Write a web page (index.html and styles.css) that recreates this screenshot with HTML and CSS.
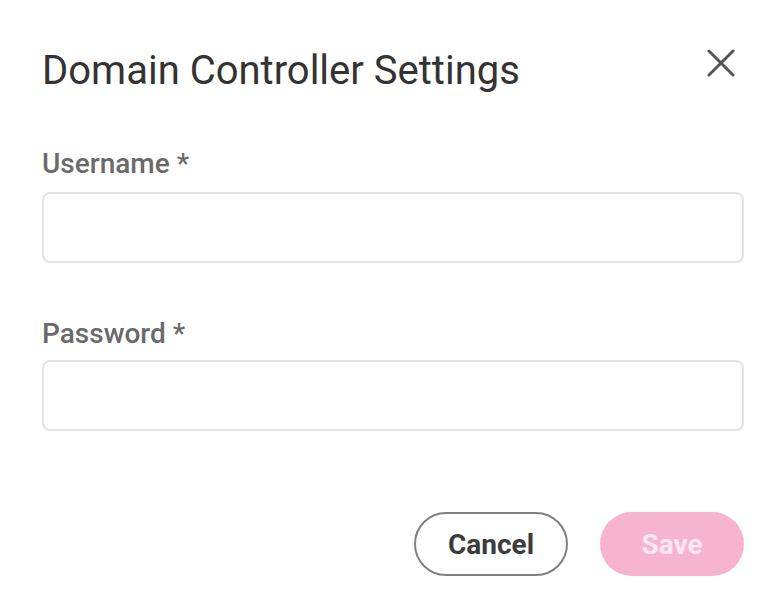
FILE: index.html
```html
<!DOCTYPE html>
<html lang="en">
<head>
<meta charset="utf-8">
<title>Domain Controller Settings</title>
<link rel="stylesheet" href="styles.css">
</head>
<body>
<div class="dialog">
  <div class="header">
    <h1 class="title">Domain Controller Settings</h1>
    <button class="close" aria-label="Close">
      <svg width="28" height="28" viewBox="0 0 28 28"><path d="M2 2L26 26M26 2L2 26" stroke="#555" stroke-width="3" stroke-linecap="round" fill="none"/></svg>
    </button>
  </div>
  <div class="field">
    <label class="label">Username *</label>
    <input class="input" type="text">
  </div>
  <div class="field field-second">
    <label class="label">Password *</label>
    <input class="input" type="password">
  </div>
  <div class="actions">
    <button class="btn btn-cancel">Cancel</button>
    <button class="btn btn-save">Save</button>
  </div>
</div>
</body>
</html>
```
FILE: styles.css
```css
html, body {
  margin: 0;
  background: #fff;
}
body {
  font-family: Roboto, "Liberation Sans", sans-serif;
  color: #333;
}
.dialog {
  padding: 46px 40px 0 42px;
}
.header {
  display: flex;
  align-items: center;
  justify-content: space-between;
  height: 48px;
}
.title {
  margin: 0;
  font-size: 40px;
  font-weight: 400;
  color: #333;
}
.close {
  align-self: flex-start;
  border: 0;
  background: none;
  padding: 0;
  width: 28px;
  height: 28px;
  margin: 3px 9px 0 0;
  display: flex;
  align-items: center;
  justify-content: center;
}
.field {
  display: flex;
  flex-direction: column;
  margin-top: 53px;
}
.field-second {
  margin-top: 54px;
}
.label {
  font-size: 28px;
  font-weight: 500;
  color: #6a6a6a;
  margin-bottom: 12px;
}
.field-second .label {
  margin-bottom: 10px;
}
.input {
  height: 71px;
  box-sizing: border-box;
  border: 2px solid #e3e3e3;
  border-radius: 8px;
  width: 100%;
  margin: 0;
}
.actions {
  display: flex;
  justify-content: flex-end;
  gap: 32px;
  margin-top: 81px;
}
.btn {
  height: 64px;
  border-radius: 32px;
  font-family: Roboto, "Liberation Sans", sans-serif;
  font-size: 28px;
  font-weight: 700;
  padding: 0;
}
.btn-cancel {
  width: 154px;
  background: #fff;
  border: 2px solid #808080;
  color: #3c3c3c;
}
.btn-save {
  width: 144px;
  background: #f7b4cf;
  border: 0;
  color: #fde8f1;
}
```
